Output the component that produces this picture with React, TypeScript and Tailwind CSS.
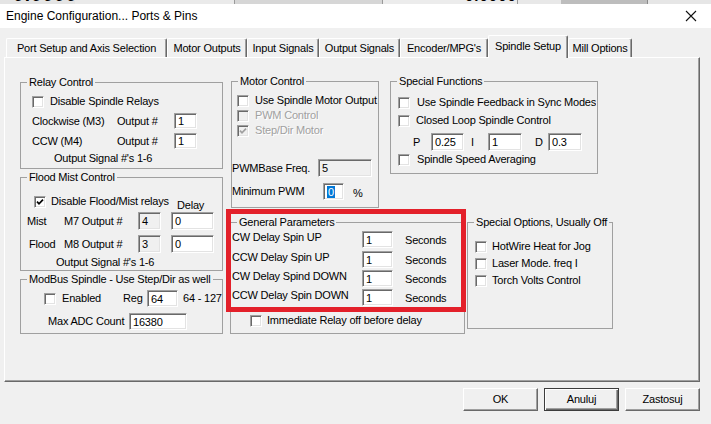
import React from "react";

const cx = (...a: (string | false | undefined)[]) => a.filter(Boolean).join(" ");

function Check({ checked, disabled }: { checked?: boolean; disabled?: boolean }) {
  return (
    <div
      className={cx(
        "w-[12px] h-[12px] shrink-0 border border-t-[#a0a0a0] border-l-[#a0a0a0] border-b-white border-r-white shadow-[inset_1px_1px_0_#696969,inset_-1px_-1px_0_#e3e3e3] flex items-center justify-center",
        disabled ? "bg-[#f0f0f0]" : "bg-white"
      )}
    >
      {checked && (
        <svg width="8" height="8" viewBox="0 0 8 8">
          <path d="M1 3.6 L3 5.8 L7 1.6" fill="none" stroke={disabled ? "#a0a0a0" : "#000"} strokeWidth="1.7" />
        </svg>
      )}
    </div>
  );
}

function Box({ v, className, disabled, sel }: { v: string; className: string; disabled?: boolean; sel?: boolean }) {
  return (
    <div
      className={cx(
        "shrink-0 border border-t-[#a0a0a0] border-l-[#a0a0a0] border-b-white border-r-white shadow-[inset_1px_1px_0_#696969,inset_-1px_-1px_0_#e3e3e3] flex items-center pl-[3px] pt-[1px]",
        disabled ? "bg-[#f0f0f0]" : "bg-white",
        className
      )}
    >
      {sel ? <span className="bg-[#0078d7] text-white px-[1px] leading-[12px]">{v}</span> : v}
    </div>
  );
}

function Group({ title, className, children }: { title: string; className: string; children?: React.ReactNode }) {
  return (
    <fieldset className={cx("border border-[#a0a0a0] shrink-0", className)}>
      <legend className="ml-[6px] px-[2px] leading-[13px]">{title}</legend>
      {children}
    </fieldset>
  );
}

const dis = "text-[#a0a0a0] [text-shadow:1px_1px_0_#fff]";

function Tab({ label, className, selected }: { label: string; className: string; selected?: boolean }) {
  return (
    <div
      className={cx(
        "shrink-0 flex justify-center border-t border-l border-t-white border-l-white border-r border-r-[#696969] shadow-[inset_-1px_0_0_#a0a0a0] rounded-t-[2px] bg-[#f0f0f0]",
        selected ? "h-[23px] -mb-px relative z-10 items-start pt-[4px]" : "h-[19px] items-center",
        className
      )}
    >
      {label}
    </div>
  );
}

function Btn({ label, def }: { label: string; def?: boolean }) {
  return (
    <div
      className={cx(
        "w-[75px] h-[23px] flex items-center justify-center bg-[#f0f0f0] border",
        def
          ? "border-[#3c3c3c] shadow-[inset_1px_1px_0_#fff,inset_-1px_-1px_0_#696969,inset_-2px_-2px_0_#a0a0a0]"
          : "border-t-white border-l-white border-b-[#696969] border-r-[#696969] shadow-[inset_-1px_-1px_0_#a0a0a0]"
      )}
    >
      {label}
    </div>
  );
}

export default function App() {
  return (
    <div className="relative w-[711px] h-[424px] overflow-hidden bg-[#f0f0f0] text-black text-[11px] leading-[13px] tracking-[-0.2px] font-['Liberation_Sans',Arial,sans-serif]">
      {/* background window strip */}
      <div className="h-[4px] flex overflow-hidden bg-[#e4e4e4]">
        <div className="w-[75px] overflow-hidden shrink-0">
          <div className="text-[19px] font-bold leading-[19px] -mt-[15px] tracking-[1px] pl-[1px]">+0.0000</div>
        </div>
        <div className="w-[160px] shrink-0 bg-[#eaeaea] border-r border-[#9a9a9a]" />
        <div className="w-[148px] shrink-0 bg-[#d6d6d6] border-r border-[#9a9a9a]" />
        <div className="w-[135px] shrink-0 bg-[#ececec] border-r border-[#9a9a9a] overflow-hidden">
          <div className="text-[15px] font-bold leading-[15px] -mt-[12px] pl-[82px] tracking-[1px]">0.0000</div>
        </div>
        <div className="w-[43px] shrink-0 bg-[#e8e8e8]" />
        <div className="w-[87px] shrink-0 bg-[#bdbdbd] border-r border-[#8a8a8a]" />
        <div className="flex-1 bg-[#e6e6e6]" />
      </div>

      {/* title bar */}
      <div className="h-[24px] bg-white flex items-center justify-between pl-[6px] pr-[14px]">
        <span className="text-[12px] tracking-normal">Engine Configuration... Ports &amp; Pins</span>
        <svg width="12" height="12" viewBox="0 0 12 12">
          <path d="M1 1 L11 11 M11 1 L1 11" stroke="#111" strokeWidth="1.1" fill="none" />
        </svg>
      </div>

      {/* tabs */}
      <div className="h-[29px] flex items-end pl-[6px]">
        <Tab label="Port Setup and Axis Selection" className="w-[161px]" />
        <Tab label="Motor Outputs" className="w-[80px]" />
        <Tab label="Input Signals" className="w-[72px]" />
        <Tab label="Output Signals" className="w-[81px]" />
        <Tab label="Encoder/MPG's" className="w-[88px]" />
        <Tab label="Spindle Setup" className="w-[80px]" selected />
        <Tab label="Mill Options" className="w-[64px]" />
      </div>

      {/* panel */}
      <div className="ml-[4px] w-[696px] h-[325px] border border-t-white border-l-white border-b-[#696969] border-r-[#696969] shadow-[inset_-1px_-1px_0_#a0a0a0] flex items-start">
        {/* left column */}
        <div className="ml-[15px] mt-[18px] w-[203px] flex flex-col">
          <Group title="Relay Control" className="h-[93px]">
            <div className="flex items-center h-[13px] mt-[6px] ml-[11px]">
              <Check />
              <span className="ml-[6px]">Disable Spindle Relays</span>
            </div>
            <div className="flex items-center h-[16px] mt-[5px] ml-[11px]">
              <span className="w-[85px] shrink-0">Clockwise (M3)</span>
              <span className="w-[57px] shrink-0">Output #</span>
              <Box v="1" className="w-[23px] h-[16px]" />
            </div>
            <div className="flex items-center h-[16px] mt-[4px] ml-[11px]">
              <span className="w-[85px] shrink-0">CCW (M4)</span>
              <span className="w-[57px] shrink-0">Output #</span>
              <Box v="1" className="w-[23px] h-[16px]" />
            </div>
            <div className="mt-[3px] ml-[33px]">Output Signal #'s 1-6</div>
          </Group>

          <Group title="Flood Mist Control" className="h-[100px] mt-[2px]">
            <div className="flex items-start mt-[11px]">
              <div className="mt-[1px] ml-[13px]">
                <Check checked />
              </div>
              <span className="ml-[5px] w-[126px] shrink-0">Disable Flood/Mist relays</span>
              <span className="mt-[4px]">Delay</span>
            </div>
            <div className="flex items-center h-[18px]">
              <span className="ml-[6px] w-[37px] shrink-0">Mist</span>
              <span className="w-[74px] shrink-0">M7 Output #</span>
              <Box v="4" className="w-[23px] h-[18px]" disabled />
              <Box v="0" className="w-[43px] h-[18px] ml-[10px]" />
            </div>
            <div className="flex items-center h-[18px] mt-[5px]">
              <span className="ml-[8px] w-[35px] shrink-0">Flood</span>
              <span className="w-[74px] shrink-0">M8 Output #</span>
              <Box v="3" className="w-[23px] h-[18px]" disabled />
              <Box v="0" className="w-[43px] h-[18px] ml-[10px]" />
            </div>
            <div className="mt-[3px] ml-[35px]">Output Signal #'s 1-6</div>
          </Group>

          <Group title="ModBus Spindle - Use Step/Dir as well" className="h-[61px] mt-[2px]">
            <div className="flex items-center h-[17px] mt-[4px]">
              <div className="ml-[23px]">
                <Check />
              </div>
              <span className="ml-[6px] w-[61px] shrink-0">Enabled</span>
              <span className="w-[24px] shrink-0">Reg</span>
              <Box v="64" className="w-[31px] h-[17px]" />
              <span className="ml-[5px]">64 - 127</span>
            </div>
            <div className="flex items-center h-[17px] mt-[6px]">
              <span className="ml-[27px] w-[81px] shrink-0">Max ADC Count</span>
              <Box v="16380" className="w-[58px] h-[17px]" />
            </div>
          </Group>
        </div>

        {/* right area */}
        <div className="ml-[7px] mt-[17px] flex flex-col">
          <div className="flex items-start">
            <Group title="Motor Control" className="ml-[1px] w-[148px] h-[133px]">
              <div className="flex items-center h-[13px] mt-[6px] ml-[5px]">
                <Check />
                <span className="ml-[6px] whitespace-nowrap">Use Spindle Motor Output</span>
              </div>
              <div className="flex items-center h-[13px] mt-[2px] ml-[5px]">
                <Check disabled />
                <span className={cx("ml-[6px]", dis)}>PWM Control</span>
              </div>
              <div className="flex items-center h-[13px] mt-[2px] ml-[5px]">
                <Check disabled checked />
                <span className={cx("ml-[6px]", dis)}>Step/Dir Motor</span>
              </div>
              <div className="flex items-center h-[18px] mt-[22px]">
                <span className="w-[86px] shrink-0">PWMBase Freq.</span>
                <Box v="5" className="w-[54px] h-[18px]" disabled />
              </div>
              <div className="flex items-center h-[17px] mt-[6px]">
                <span className="w-[91px] shrink-0">Minimum PWM</span>
                <Box v="0" className="w-[21px] h-[17px]" sel />
                <span className="ml-[9px] self-end">%</span>
              </div>
            </Group>

            <Group title="Special Functions" className="ml-[11px] w-[208px] h-[99px]">
              <div className="flex items-center h-[13px] mt-[8px] ml-[7px]">
                <Check />
                <span className="ml-[7px] w-[179px] overflow-hidden whitespace-nowrap">Use Spindle Feedback in Sync Modes</span>
              </div>
              <div className="flex items-center h-[13px] mt-[5px] ml-[7px]">
                <Check />
                <span className="ml-[6px]">Closed Loop Spindle Control</span>
              </div>
              <div className="flex items-center h-[18px] mt-[6px]">
                <span className="ml-[22px] w-[18px] shrink-0">P</span>
                <Box v="0.25" className="w-[33px] h-[18px]" />
                <span className="ml-[7px] w-[17px] shrink-0">I</span>
                <Box v="1" className="w-[34px] h-[18px]" />
                <span className="ml-[13px] w-[13px] shrink-0">D</span>
                <Box v="0.3" className="w-[34px] h-[18px]" />
              </div>
              <div className="flex items-center h-[13px] mt-[2px] ml-[7px]">
                <Check />
                <span className="ml-[7px]">Spindle Speed Averaging</span>
              </div>
            </Group>
          </div>

          <div className="flex items-start mt-[8px]">
            <Group title="General Parameters" className="w-[235px] h-[118px]">
              {[
                ["CW Delay Spin UP", "mt-[2px]"],
                ["CCW Delay Spin UP", "mt-[3px]"],
                ["CW Delay Spind DOWN", "mt-[2px]"],
                ["CCW Delay Spin DOWN", "mt-[2px]"],
              ].map(([l, m]) => (
                <div key={l} className={cx("flex items-start h-[17px]", m)}>
                  <span className="ml-[1px] w-[130px] shrink-0">{l}</span>
                  <Box v="1" className="w-[31px] h-[17px]" />
                  <span className="ml-[12px] mt-[3px]">Seconds</span>
                </div>
              ))}
              <div className="flex items-center h-[13px] mt-[8px] ml-[19px]">
                <Check />
                <span className="ml-[5px]">Immediate Relay off before delay</span>
              </div>
            </Group>

            <Group title="Special Options, Usually Off" className="ml-[2px] w-[146px] h-[113px]">
              <div className="flex items-center h-[13px] mt-[11px] ml-[7px]">
                <Check />
                <span className="ml-[5px]">HotWire Heat for Jog</span>
              </div>
              <div className="flex items-center h-[13px] mt-[4px] ml-[7px]">
                <Check />
                <span className="ml-[5px]">Laser Mode. freq I</span>
              </div>
              <div className="flex items-center h-[13px] mt-[4px] ml-[7px]">
                <Check />
                <span className="ml-[5px]">Torch Volts Control</span>
              </div>
            </Group>
          </div>
        </div>
      </div>

      {/* buttons */}
      <div className="mt-[6px] flex justify-end gap-[6px] pr-[11px]">
        <Btn label="OK" />
        <Btn label="Anuluj" def />
        <Btn label="Zastosuj" />
      </div>

      {/* red annotation rectangle */}
      <div className="absolute left-[226px] top-[209px] w-[240px] h-[103px] border-[5px] border-[#e3202a]" />
    </div>
  );
}
